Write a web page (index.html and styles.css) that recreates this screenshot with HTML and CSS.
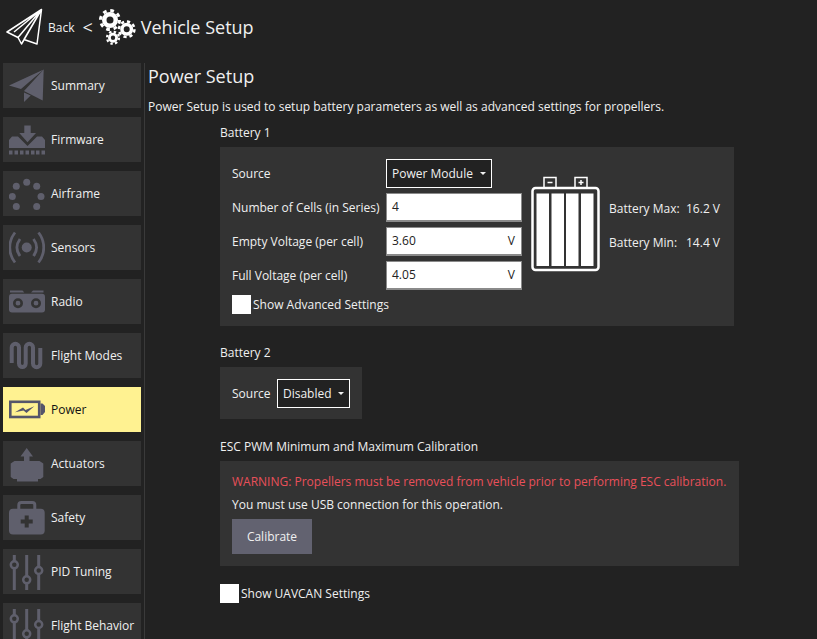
FILE: index.html
```html
<!DOCTYPE html>
<html lang="en">

<head>
    <meta charset="UTF-8">
    <meta name="viewport" content="width=device-width, initial-scale=1.0">
    <title>Vehicle Setup</title>
    <link rel="stylesheet" href="styles.css">
</head>

<body>
    <svg class="defs" width="0" height="0">
        <symbol id="sliders" viewBox="0 0 36 36">
            <path d="M5.3 1V7M5.3 14.500V36M17.700 1V22M17.700 29.500V36M29.700 1V13M29.700 20V36" fill="none" stroke="currentColor" stroke-width="3" />
            <circle cx="5.300" cy="10.800" r="3.500" fill="none" stroke="currentColor" stroke-width="2.500" />
            <circle cx="17.700" cy="25.800" r="3.500" fill="none" stroke="currentColor" stroke-width="2.500" />
            <circle cx="29.700" cy="16.500" r="3.500" fill="none" stroke="currentColor" stroke-width="2.500" />
        </symbol>
    </svg>

    <header class="topbar">
        <svg class="back-icon" width="38" height="38" viewBox="0 0 38 38">
            <path d="M35.500 1.500 1 24 12 29.500 15.500 36 18 31.500 31 36Z M35.500 1.500 12 29.500 M35.500 1.500 15.500 36 M35.500 1.500 18 31.500 M35.500 1.500 8 24" fill="none" stroke="#fff" stroke-width="1.500" stroke-linejoin="round" />
        </svg>
        <span class="back-label">Back</span>
        <span class="back-sep">&lt;</span>
        <svg class="gears-icon" width="38" height="38" viewBox="0 0 38 38">
            <g fill="none" stroke="#fff">
                <circle cx="12" cy="12" r="5.750" stroke-width="4.500" />
                <circle cx="12" cy="12" r="9.500" stroke-width="3" stroke-dasharray="3.700 3.760" />
                <circle cx="28.700" cy="21.300" r="4.750" stroke-width="3.500" />
                <circle cx="28.700" cy="21.300" r="7.750" stroke-width="2.500" stroke-dasharray="3.200 2.890" />
                <circle cx="15" cy="29.700" r="3.600" stroke-width="2.800" />
                <circle cx="15" cy="29.700" r="6" stroke-width="2.200" stroke-dasharray="2.400 2.310" />
            </g>
        </svg>
        <span class="page-title">Vehicle Setup</span>
    </header>

    <div class="layout">
        <nav class="sidebar">
            <a class="nav-item">
                <svg class="nav-icon" viewBox="0 0 36 36">
                    <path d="M34.700 1.500 0 17.500 12 21ZM34.700 1.500 15 23 33.700 32.500ZM15 24.500V34L21.700 27.500Z" />
                </svg>
                Summary
            </a>
            <a class="nav-item">
                <svg class="nav-icon" viewBox="0 0 36 36">
                    <path d="M15.300 3.500H21.700V11H27L18.500 20.200 10.300 11H15.300Z" />
                    <path d="M0 26V18L3 14.500H9L18.500 24 28 14.500H33L36 18V26Z" />
                    <path d="M0 28.500h3.500v4H0ZM5.500 28.500h3.500v4H5.500ZM11 28.500h3.500v4H11ZM16.500 28.500h3.500v4H16.500ZM22 28.500h3.500v4H22ZM27 28.500h3.500v4H27ZM32.500 28.500h3.500v4H32.500Z" />
                </svg>
                Firmware
            </a>
            <a class="nav-item">
                <svg class="nav-icon" viewBox="0 0 36 36">
                    <circle cx="17.700" cy="6.200" r="3.500" />
                    <circle cx="27.700" cy="10.200" r="3.500" />
                    <circle cx="32" cy="20.500" r="3.500" />
                    <circle cx="27.700" cy="30.500" r="3.500" />
                    <circle cx="7.300" cy="30.500" r="3.500" />
                    <circle cx="3.300" cy="20.500" r="3.500" />
                    <circle cx="7.300" cy="10.200" r="3.500" />
                </svg>
                Airframe
            </a>
            <a class="nav-item">
                <svg class="nav-icon" viewBox="0 0 36 36">
                    <circle cx="17.700" cy="17.500" r="5" />
                    <path d="M11 9C7 14.500 7 20.500 11 26M24.500 9C28.500 14.500 28.500 20.500 24.500 26M6 2.500C-1 11.500-1 23.500 6 32.500M29.500 2.500C36.500 11.500 36.500 23.500 29.500 32.500" fill="none" stroke="currentColor" stroke-width="2.800" />
                </svg>
                Sensors
            </a>
            <a class="nav-item">
                <svg class="nav-icon" viewBox="0 0 36 36">
                    <path d="M1 6.500H13.500L15.300 8.500H1ZM22 8.500 24 6.500H34.500V8.500Z" />
                    <path d="M3 9.800H33Q36 9.800 36 13V25.500Q36 28.500 33 28.500H3Q0 28.500 0 25.500V13Q0 9.800 3 9.800Z" />
                    <circle cx="9" cy="19.200" r="3.700" fill="none" stroke="#333" stroke-width="2.600" />
                    <circle cx="27" cy="19.200" r="3.700" fill="none" stroke="#333" stroke-width="2.600" />
                </svg>
                Radio
            </a>
            <a class="nav-item">
                <svg class="nav-icon" viewBox="0 0 36 36">
                    <path d="M2.700 25V9.400A3.650 3.650 0 0 1 10 9.400V25.600A3.350 3.350 0 0 0 16.700 25.600V9.400A3.650 3.650 0 0 1 24 9.400V25.600A3.650 3.650 0 0 0 31.300 25.600V10" fill="none" stroke="currentColor" stroke-width="4" />
                </svg>
                Flight Modes
            </a>
            <a class="nav-item nav-item-active">
                <svg class="nav-icon" viewBox="0 0 36 36">
                    <rect x="1.300" y="9.800" width="28.900" height="15.200" fill="none" stroke="currentColor" stroke-width="2.600" />
                    <path d="M31.500 11.500H33.500L36 14V20L33.500 23H31.500Z" />
                    <path d="M6 20.200 14 15.500 16.500 18 25.300 14.200 17.500 21 14.500 18.500Z" />
                </svg>
                Power
            </a>
            <a class="nav-item">
                <svg class="nav-icon" viewBox="0 0 36 36">
                    <path d="M17.700 2 24 10.500H20.500V15H30.500L34.300 17.500V31L31.500 33H29V35.500H8V33H4.500L1.700 31V17.500L5.500 15H15V10.500H11.500Z" />
                </svg>
                Actuators
            </a>
            <a class="nav-item">
                <svg class="nav-icon" viewBox="0 0 36 36">
                    <path d="M9.800 9V5Q9.800 2.500 12.300 2.500H23.300Q25.800 2.500 25.800 5V9" fill="none" stroke="currentColor" stroke-width="3" />
                    <rect y="8.800" width="35.700" height="25.700" rx="4" />
                    <path d="M15.700 15.500H19.700V19.500H23.700V23.500H19.700V27.500H15.700V23.500H11.700V19.500H15.700Z" fill="#333" />
                </svg>
                Safety
            </a>
            <a class="nav-item">
                <svg class="nav-icon"><use href="#sliders" /></svg>
                PID Tuning
            </a>
            <a class="nav-item">
                <svg class="nav-icon"><use href="#sliders" /></svg>
                Flight Behavior
            </a>
        </nav>

        <main class="content">
            <h2 class="content-title">Power Setup</h2>
            <p class="content-desc">Power Setup is used to setup battery parameters as well as advanced settings for propellers.</p>

            <section class="sections">
                <h3 class="section-title section-battery1">Battery 1</h3>
                <div class="panel panel-battery1">
                    <div class="battery-form">
                        <label class="field-label">Source</label>
                        <div class="combo combo-power">Power Module <span class="caret"></span></div>
                        <label class="field-label">Number of Cells (in Series)</label>
                        <div class="field">4</div>
                        <label class="field-label">Empty Voltage (per cell)</label>
                        <div class="field">3.60 <span>V</span></div>
                        <label class="field-label">Full Voltage (per cell)</label>
                        <div class="field">4.05 <span>V</span></div>
                        <div class="check-row check-row-form"><span class="check-box"></span>Show Advanced Settings</div>
                    </div>
                    <svg class="battery-icon" width="70" height="96" viewBox="0 0 70 96">
                        <path d="M13 11V1.500H25V11M44 11V1.500H56V11" fill="none" stroke="#fff" stroke-width="1.500" />
                        <path d="M16.500 6.500H21.500M47.500 6.500H52.500M50 4V9" fill="none" stroke="#fff" stroke-width="1.500" />
                        <rect x="1.500" y="12" width="66" height="82" rx="3" fill="none" stroke="#fff" stroke-width="2.500" />
                        <path d="M5.500 17.500H18V90H5.500ZM20.500 17.500H33V90H20.500ZM35 17.500H47.500V90H35ZM50 17.500H62.500V90H50Z" fill="#fff" />
                    </svg>
                    <div class="battery-stats">
                        <div class="stat-row"><span class="stat-name">Battery Max:</span><span>16.2 V</span></div>
                        <div class="stat-row"><span class="stat-name">Battery Min:</span><span>14.4 V</span></div>
                    </div>
                </div>

                <h3 class="section-title section-battery2">Battery 2</h3>
                <div class="panel panel-battery2">
                    <label class="field-label field-label-source">Source</label>
                    <div class="combo combo-disabled">Disabled <span class="caret"></span></div>
                </div>

                <h3 class="section-title section-esc">ESC PWM Minimum and Maximum Calibration</h3>
                <div class="panel panel-esc">
                    <p class="warning">WARNING: Propellers must be removed from vehicle prior to performing ESC calibration.</p>
                    <p class="usb-note">You must use USB connection for this operation.</p>
                    <button class="calibrate" type="button">Calibrate</button>
                </div>

                <div class="check-row check-row-uavcan"><span class="check-box"></span>Show UAVCAN Settings</div>
            </section>
        </main>
    </div>
</body>

</html>
```

FILE: styles.css
```css
/* Base */
html,
body {
    height: 100%;
}

body {
    margin: 0;
    overflow: hidden;
    background-color: #222222;
    color: #f0f0f0;
    font-family: "Open Sans", sans-serif;
    font-size: 12px;
}

.defs {
    position: absolute;
}

/* Top bar */
.topbar {
    display: flex;
    align-items: center;
    height: 54px;
    padding-left: 6px;
}

.back-label {
    margin-left: 4px;
}

.back-sep {
    margin-left: 8px;
    font-size: 18px;
}

.gears-icon {
    margin-left: 5px;
}

.page-title {
    margin-left: 5px;
    font-size: 18px;
}

/* Sidebar */
.layout {
    display: flex;
    padding-top: 9px;
}

.sidebar {
    display: flex;
    flex-direction: column;
    flex: none;
    gap: 9px;
    width: 138px;
    margin-left: 3px;
    padding-right: 3px;
    border-right: 1px solid #3a3a3a;
}

.nav-item {
    display: flex;
    align-items: center;
    flex: none;
    gap: 6px;
    height: 45px;
    padding-left: 6px;
    background-color: #333333;
    color: #f0f0f0;
}

.nav-icon {
    flex: none;
    width: 36px;
    height: 36px;
    color: #5f5f6c;
    fill: currentColor;
}

.nav-item-active {
    background-color: #fff291;
    color: #111111;
}

.nav-item-active .nav-icon {
    color: #55556a;
}

/* Content */
.content {
    flex: 1;
    padding-left: 3px;
}

.content-title {
    margin: 1px 0 0;
    font-size: 18px;
    font-weight: normal;
    line-height: 24px;
}

.content-desc {
    margin: 10px 0 0;
    line-height: 17px;
}

.sections {
    margin-left: 72px;
}

.section-title {
    margin: 0 0 6px;
    font-size: 12px;
    font-weight: normal;
    line-height: 17px;
}

.section-battery1 {
    margin-top: 9px;
}

.section-battery2 {
    margin-top: 18px;
}

.section-esc {
    margin-top: 19px;
}

.panel {
    background-color: #333333;
}

.panel-battery1 {
    display: flex;
    align-items: flex-start;
    width: 502px;
    padding: 12px 0 12px 12px;
}

.battery-form {
    display: grid;
    grid-template-columns: 154px 136px;
    grid-template-rows: repeat(4, 28px) 19px;
    row-gap: 6px;
    align-items: center;
}

.field-label {
    line-height: 17px;
}

.field-label-source {
    width: 39px;
}

.combo {
    display: flex;
    align-items: center;
    justify-content: space-between;
    box-sizing: border-box;
    height: 29px;
    padding: 0 5px;
    border: 1px solid #ffffff;
    background-color: #222222;
}

.combo-power {
    width: 106px;
}

.caret {
    width: 0;
    height: 0;
    border-left: 3.5px solid transparent;
    border-right: 3.5px solid transparent;
    border-top: 3.5px solid #f0f0f0;
}

.field {
    display: flex;
    align-items: center;
    justify-content: space-between;
    box-sizing: border-box;
    height: 29px;
    padding: 0 6px 0 5px;
    border: 1px solid #8a8a8a;
    border-bottom-width: 2px;
    background-color: #ffffff;
    color: #222222;
}

.check-row {
    display: flex;
    align-items: center;
    line-height: 19px;
}

.check-row-form {
    grid-column: 1 / 3;
    height: 19px;
}

.check-box {
    width: 19px;
    height: 19px;
    margin-right: 2px;
    background-color: #ffffff;
}

.battery-icon {
    flex: none;
    margin: 17px 0 0 9px;
}

.battery-stats {
    margin: 41px 0 0 8px;
}

.stat-row {
    display: flex;
    height: 34px;
    line-height: 17px;
}

.stat-name {
    width: 77px;
}

.panel-battery2 {
    display: flex;
    align-items: center;
    width: 118px;
    height: 52px;
    padding: 0 12px;
    gap: 6px;
}

.combo-disabled {
    width: 73px;
}

.panel-esc {
    width: 495px;
    height: 81px;
    padding: 12px;
}

.warning {
    margin: 0;
    color: #e9505a;
    line-height: 17px;
}

.usb-note {
    margin: 6px 0 0;
    line-height: 17px;
}

.calibrate {
    display: block;
    width: 80px;
    height: 35px;
    margin-top: 6px;
    border: none;
    background-color: #626270;
    color: #f0f0f0;
    font-family: inherit;
    font-size: 12px;
}

.check-row-uavcan {
    margin-top: 18px;
}
```
